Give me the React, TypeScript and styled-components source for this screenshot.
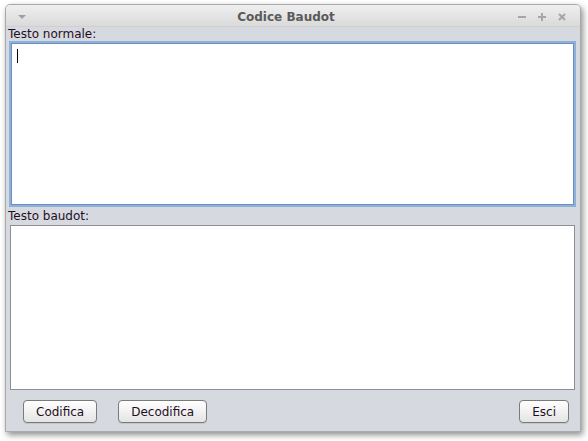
import React from 'react';
import styled, { createGlobalStyle } from 'styled-components';

const GlobalStyle = createGlobalStyle`
  html, body {
    margin: 0;
    padding: 0;
    background: #ffffff;
  }
`;

const Screen = styled.div`
  width: 588px;
  height: 441px;
  box-sizing: border-box;
  padding: 4px 7px 9px 5px;
  background: #ffffff;
`;

const Window = styled.div`
  height: 100%;
  display: flex;
  flex-direction: column;
  border: 1px solid #a9a9a9;
  border-radius: 5px 5px 0 0;
  box-sizing: border-box;
  background: #d6d9df;
  box-shadow: 2px 3px 6px rgba(0, 0, 0, 0.45);
  overflow: hidden;
  font-family: 'DejaVu Sans', sans-serif;
`;

const TitleBar = styled.div`
  height: 22px;
  flex: none;
  display: flex;
  align-items: center;
  padding: 2px 13px 0 11px;
  box-sizing: border-box;
  background: linear-gradient(#efefef, #dadada);
  border-bottom: 1px solid #d0d0d0;
`;

const Title = styled.div`
  flex: 1;
  text-align: center;
  font-size: 12px;
  font-weight: bold;
  color: #5a5a5a;
  padding-left: 28px;
`;

const Controls = styled.div`
  display: flex;
  gap: 10px;
  align-items: center;
`;

const Body = styled.div`
  flex: 1;
  display: flex;
  flex-direction: column;
  padding: 0 4px 0 2px;
`;

const Label = styled.div<{ $height: number }>`
  font-size: 12px;
  color: #1f1024;
  height: ${({ $height }) => $height}px;
  line-height: ${({ $height }) => $height}px;
`;

const TextArea = styled.div<{ $focused?: boolean; $height: number }>`
  height: ${({ $height }) => $height}px;
  margin-left: ${({ $focused }) => ($focused ? 1 : 2)}px;
  margin-right: ${({ $focused }) => ($focused ? 0 : 1)}px;
  background: #ffffff;
  box-sizing: border-box;
  border: ${({ $focused }) => ($focused ? '2px solid #8fb1d8' : '1px solid #8a8e95')};
  box-shadow: ${({ $focused }) => ($focused ? 'inset 0 0 0 1px #6c8fbf' : 'none')};
  padding: 6px 0 0 6px;
`;

const Caret = styled.div`
  width: 1px;
  height: 14px;
  background: #000000;
`;

const ButtonRow = styled.div`
  display: flex;
  align-items: center;
  padding: 10px 7px 0 15px;
  gap: 21px;
`;

const Button = styled.button`
  height: 23px;
  padding: 0 12px;
  border: 1px solid #7a7a7a;
  border-radius: 4px;
  background: linear-gradient(#ffffff, #e4e4e4);
  font-family: 'DejaVu Sans', sans-serif;
  font-size: 12px;
  color: #1f1024;
  box-shadow: 0 1px 0 #c4c6ca;
`;

const Spacer = styled.div`
  flex: 1;
`;

export default function App() {
  return (
    <>
      <GlobalStyle />
      <Screen>
        <Window>
          <TitleBar>
            <svg width="10" height="6" viewBox="0 0 10 6">
              <path d="M1 1 L9 1 L5 5 Z" fill="#a0a0a0" />
            </svg>
            <Title>Codice Baudot</Title>
            <Controls>
              <svg width="10" height="10" viewBox="0 0 10 10">
                <rect x="1" y="4" width="8" height="2" fill="#a6a6a6" />
              </svg>
              <svg width="10" height="10" viewBox="0 0 10 10">
                <rect x="1" y="4" width="8" height="2" fill="#a6a6a6" />
                <rect x="4" y="1" width="2" height="8" fill="#a6a6a6" />
              </svg>
              <svg width="10" height="10" viewBox="0 0 10 10">
                <path d="M2 2 L8 8 M8 2 L2 8" stroke="#a6a6a6" strokeWidth="2" />
              </svg>
            </Controls>
          </TitleBar>
          <Body>
            <Label $height={14}>Testo normale:</Label>
            <TextArea $focused $height={166}>
              <Caret />
            </TextArea>
            <Label $height={18}>Testo baudot:</Label>
            <TextArea $height={165} />
            <ButtonRow>
              <Button>Codifica</Button>
              <Button>Decodifica</Button>
              <Spacer />
              <Button>Esci</Button>
            </ButtonRow>
          </Body>
        </Window>
      </Screen>
    </>
  );
}
